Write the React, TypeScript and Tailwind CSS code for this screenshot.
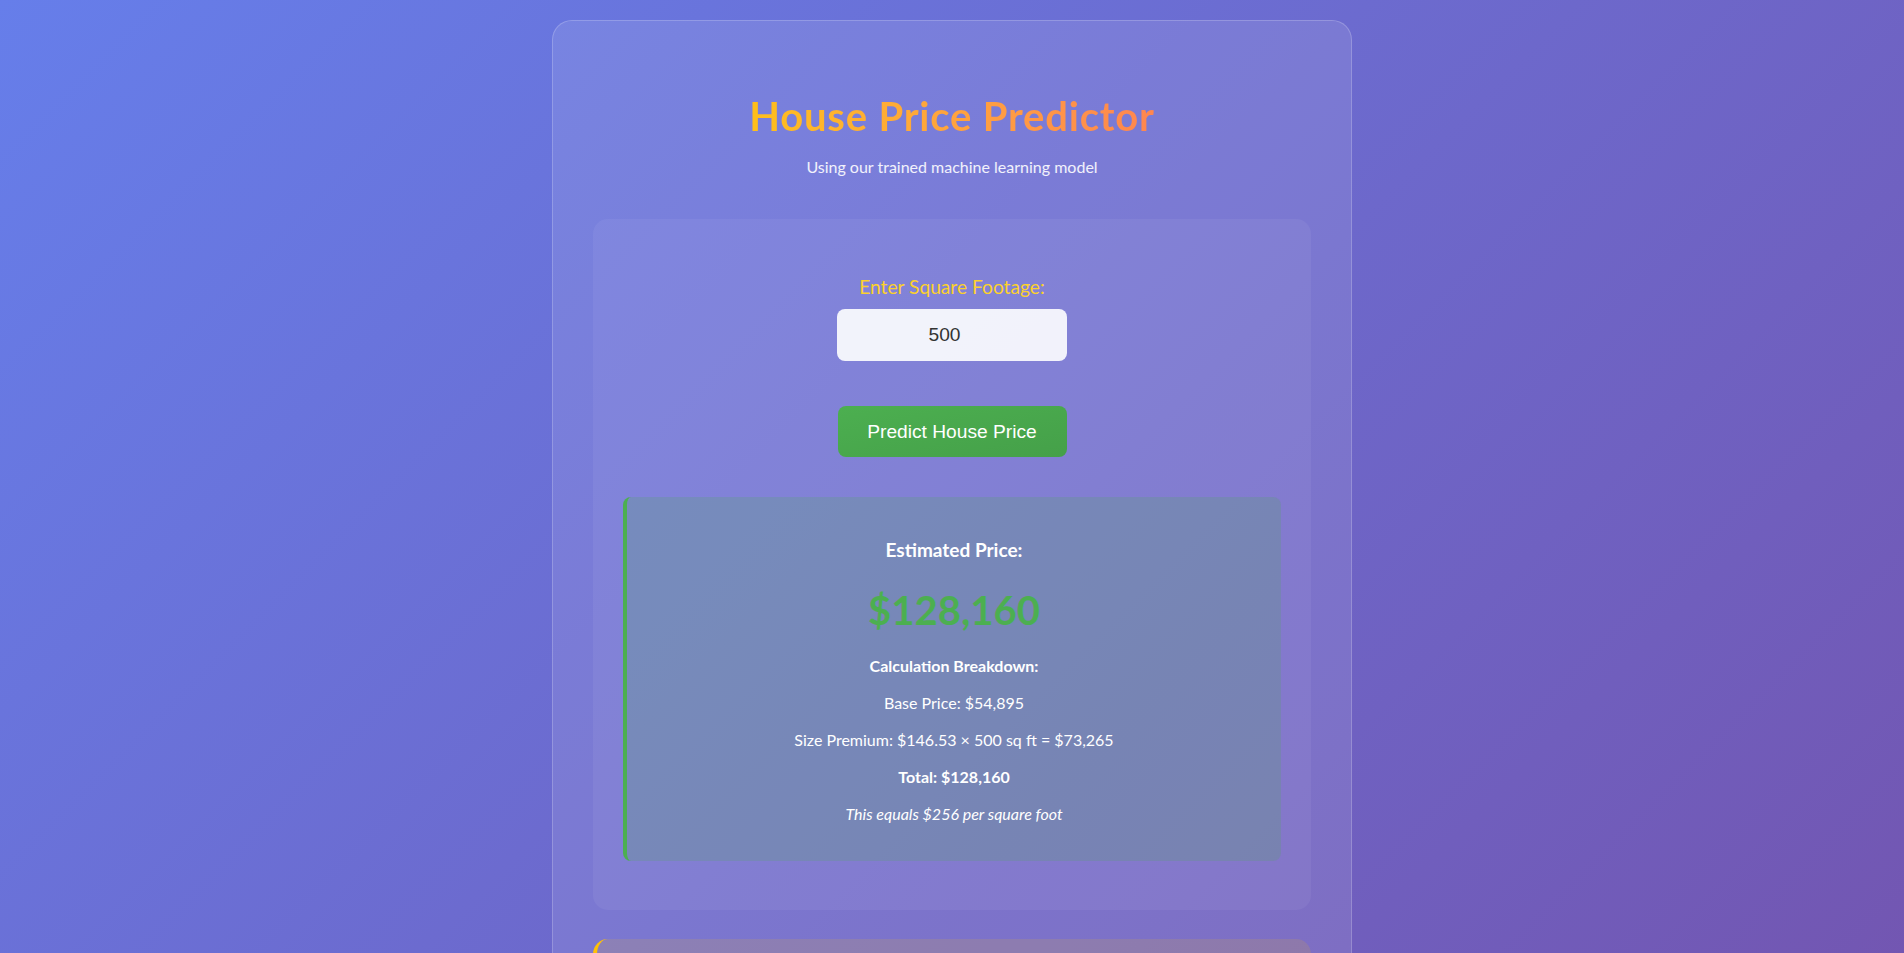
import { useState } from "react";

const BASE_PRICE = 54895;
const PRICE_PER_SQFT = 146.53;

function fmt(n: number): string {
  return "$" + Math.round(n).toLocaleString("en-US");
}

export default function App(): React.JSX.Element {
  const [sqft, setSqft] = useState("500");

  const size = Number(sqft) || 0;
  const premium = PRICE_PER_SQFT * size;
  const total = BASE_PRICE + premium;

  return (
    <div
      className="min-h-[1760px] bg-[linear-gradient(135deg,#667eea_0%,#764ba2_100%)] p-5 text-white"
      style={{ fontFamily: "Lato, 'Open Sans', sans-serif" }}
    >
      <div className="mx-auto max-w-[800px] rounded-[20px] border border-white/20 bg-white/10 p-10">
        <div className="text-center">
          <h1 className="mt-[31px] text-[40px] leading-[48px] font-bold tracking-[0.8px]">
            <span className="inline-block bg-linear-to-r from-[#ffbf18] to-[#ff864f] bg-clip-text text-transparent">
              House Price Predictor
            </span>
          </h1>
          <p className="mt-[15px] text-base leading-6 text-white/90">Using our trained machine learning model</p>
        </div>

        <div className="mt-[40px] rounded-[15px] bg-white/5 px-[30px] pt-[30px] pb-[30px]">
          <div className="flex flex-col items-center">
            <label htmlFor="sqft" className="mt-[26px] block text-[19.2px] leading-[23px] text-[#fcd12c]">
              Enter Square Footage:
            </label>
            <input
              id="sqft"
              type="text"
              inputMode="numeric"
              value={sqft}
              onChange={(e) => setSqft(e.target.value)}
              className="mt-[11px] h-[52px] w-[230px] rounded-lg bg-white/90 pr-[15px] text-center text-[19.2px] text-[#333] outline-none"
              style={{ fontFamily: "'Liberation Sans', Arial, sans-serif" }}
            />
            <button
              className="mt-[45px] h-[51px] w-[229px] rounded-lg bg-linear-to-br from-[#4caf50] to-[#45a049] text-[19.2px] leading-[21px] text-white"
              style={{ fontFamily: "'Liberation Sans', Arial, sans-serif" }}
            >
              Predict House Price
            </button>
          </div>

          <div className="mt-10 mb-[19px] flex flex-col rounded-lg border-l-4 border-[#4caf50] bg-[rgba(76,175,80,0.2)] p-5 text-center">
            <h3 className="mt-5 text-[19px] leading-[25px] font-bold">Estimated Price:</h3>
            <div className="mt-6 text-[40px] leading-[48px] font-bold text-[#4caf50]">{fmt(total)}</div>
            <p className="mt-[21px] text-base leading-[21px] font-bold">Calculation Breakdown:</p>
            <p className="mt-4 text-base leading-[21px]">Base Price: {fmt(BASE_PRICE)}</p>
            <p className="mt-4 text-base leading-[21px]">
              Size Premium: ${PRICE_PER_SQFT.toFixed(2)} × {size} sq ft = {fmt(premium)}
            </p>
            <p className="mt-4 text-base leading-[21px] font-bold">Total: {fmt(total)}</p>
            <p className="mt-4 mb-[17px] text-base leading-[21px] italic">
              This equals {fmt(size ? total / size : 0)} per square foot
            </p>
          </div>
        </div>

        <div className="mt-[29px] rounded-[15px] border-l-4 border-[#ffc107] bg-[rgba(255,193,7,0.13)] p-[30px] text-center">
          <h3 className="text-[19px] leading-[25px] font-bold text-[#ffd54f]">About the Model</h3>
          <p className="mt-4 text-base leading-[21px] text-white/90">
            Linear regression trained on historical house sales.
          </p>
          <p className="mt-4 text-base leading-[21px] text-white/90">Price = $54,895 + $146.53 × square footage</p>
          <p className="mt-4 text-base leading-[21px] text-white/90">
            Estimates are for illustration only and may differ from real market values.
          </p>
        </div>
      </div>
    </div>
  );
}
